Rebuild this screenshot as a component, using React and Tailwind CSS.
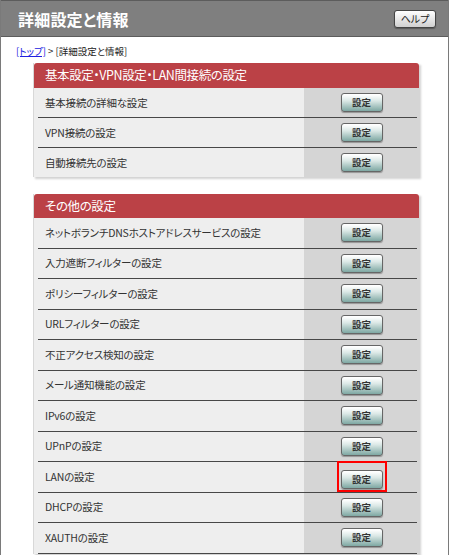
import React from 'react';

const basicRows = ['基本接続の詳細な設定', 'VPN接続の設定', '自動接続先の設定'];

const otherRows = [
  'ネットボランチDNSホストアドレスサービスの設定',
  '入力遮断フィルターの設定',
  'ポリシーフィルターの設定',
  'URLフィルターの設定',
  '不正アクセス検知の設定',
  'メール通知機能の設定',
  'IPv6の設定',
  'UPnPの設定',
  'LANの設定',
  'DHCPの設定',
  'XAUTHの設定',
];

const SetButton = () => (
  <button className="w-[42px] h-[19px] rounded-[3px] border border-[#666] bg-gradient-to-b from-white from-5% via-[#dbe8e6] via-40% to-[#7ea8a3] text-[9.5px] font-bold leading-none text-[#333] shadow-[0_1px_1px_rgba(0,0,0,0.3)]">
    設定
  </button>
);

const Divider = () => (
  <div className="flex h-px">
    <div className="w-[4px] bg-[#eeeeee]" />
    <div className="flex-1 bg-[#474747]" />
    <div className="w-[2px] bg-[#d5d5d5]" />
  </div>
);

const Row = ({ label, rowClass, highlight }) => (
  <div className={`flex ${rowClass}`}>
    <div className="flex-1 flex items-center pl-[11px] bg-[#eeeeee] text-[10.5px] tracking-[-0.2px] text-[#333]">
      {label}
    </div>
    <div className="w-[115px] flex items-center justify-center bg-[#d5d5d5]">
      {highlight ? (
        <div className="border-2 border-[#ff0000] px-[2px] py-px">
          <SetButton />
        </div>
      ) : (
        <SetButton />
      )}
    </div>
  </div>
);

const Panel = ({ title, rows, headClass, rowClass, highlightRow, trailingLine }) => (
  <div className="w-[386px] ml-[32px] border-l border-[#d8d8d8] shadow-[2px_2px_2px_rgba(0,0,0,0.18)]">
    <div className={`flex items-center pl-[11px] rounded-t-[3px] bg-[#bb4146] text-white text-[12.5px] tracking-[-0.4px] ${headClass}`}>
      {title}
    </div>
    {rows.map((label, i) => (
      <React.Fragment key={label}>
        {i > 0 && <Divider />}
        <Row label={label} rowClass={rowClass} highlight={label === highlightRow} />
      </React.Fragment>
    ))}
    {trailingLine && <Divider />}
  </div>
);

export default function App() {
  return (
    <div className="w-[449px] h-[555px] overflow-hidden bg-white border-x border-[#7a7a7a] font-['Noto_Sans_CJK_JP','Liberation_Sans',sans-serif] [font-feature-settings:'palt']">
      <div className="h-[37px] flex items-center justify-between pl-[17px] pr-[12px] bg-[#7f7f7f] border-t border-b border-[#5c5c5c]">
        <h1 className="text-[16px] font-bold text-white tracking-[0.2px]">詳細設定と情報</h1>
        <button className="w-[42px] h-[18px] rounded-[3px] border border-[#444] bg-gradient-to-b from-white to-[#d0d0d0] text-[10px] leading-none text-[#222] shadow-[0_1px_1px_rgba(0,0,0,0.3)]">
          ヘルプ
        </button>
      </div>

      <div className="pl-[15px] pt-[8px] pb-[5px] h-[26px] text-[9.5px] leading-[12px] text-[#222]">
        <a href="#" className="text-[#2020e0] underline">[トップ]</a>
        <span> &gt; [詳細設定と情報]</span>
      </div>

      <Panel title="基本設定・VPN設定・LAN間接続の設定" rows={basicRows} headClass="h-[25px]" rowClass="h-[29px]" />

      <div className="h-[17px]" />

      <Panel
        title="その他の設定"
        rows={otherRows}
        headClass="h-[24px]"
        rowClass="h-[29.5px]"
        highlightRow="LANの設定"
        trailingLine
      />
    </div>
  );
}
